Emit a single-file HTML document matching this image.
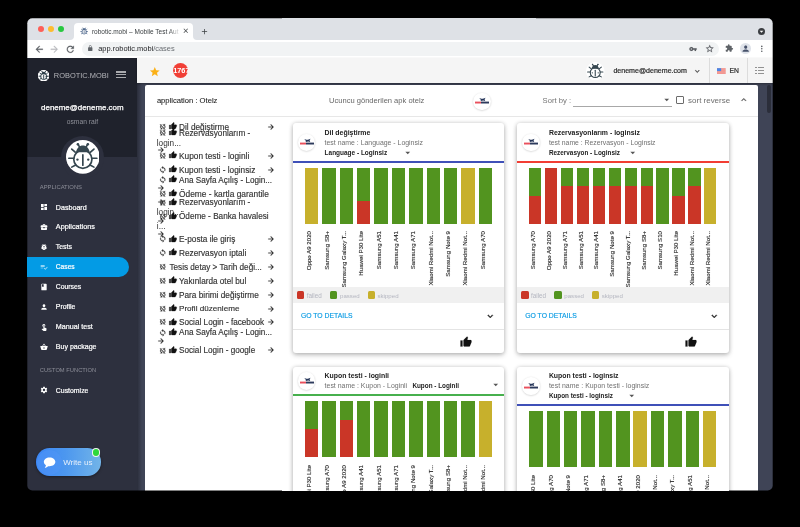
<!DOCTYPE html>
<html><head><meta charset="utf-8"><title>robotic.mobi</title>
<style>
html,body{margin:0;padding:0;background:#000;}
body{width:800px;height:527px;overflow:hidden;position:relative;font-family:"Liberation Sans",sans-serif;}
#win{position:absolute;left:0;top:0;will-change:transform;width:800px;height:527px;clip-path:inset(18.200px 27.300px 36.600px 27.300px round 5px);overflow:hidden;}
.t{position:absolute;white-space:nowrap;display:block;}
.r{position:absolute;}
.i{position:absolute;display:block;}
</style></head>
<body>
<div id="win">
<div class="r" style="left:27.00px;top:18.00px;width:746.00px;height:21.50px;background:#dee1e6;"></div>
<div class="r" style="left:27.00px;top:39.50px;width:746.00px;height:18.50px;background:#fff;"></div>
<div class="r" style="left:74.40px;top:22.70px;width:119.00px;height:17.30px;background:#fff;border-radius:4px 4px 0 0"></div>
<svg class="i" style="left:70.400px;top:35.500px;width:4px;height:4px" viewBox="0 0 4 4"><path fill="#fff" d="M4 0v4H0A4 4 0 0 0 4 0z"/></svg>
<svg class="i" style="left:193.400px;top:35.500px;width:4px;height:4px" viewBox="0 0 4 4"><path fill="#fff" d="M0 0v4h4A4 4 0 0 1 0 0z"/></svg>
<div class="r" style="left:37.90px;top:26.20px;width:6.20px;height:6.20px;background:#fe5f57;border-radius:50%"></div>
<div class="r" style="left:48.10px;top:26.20px;width:6.20px;height:6.20px;background:#febc2e;border-radius:50%"></div>
<div class="r" style="left:57.90px;top:26.20px;width:6.20px;height:6.20px;background:#28c840;border-radius:50%"></div>
<svg class="i" style="left:79.80px;top:26.90px;width:8.4px;height:8.4px" viewBox="0 0 40 40"><g stroke="#556d8f" stroke-width="3.4" stroke-linecap="round" fill="none"><path d="M16.300 8.500L14.100 5.100M23.700 8.500L25.900 5.100"/><path d="M10.900 14.500L6.800 10.900M29.100 14.500L33.200 10.900M9.200 21.700H3.400M30.800 21.700H36.600M11.500 29.600L6.800 32.200M28.500 29.600L33.200 32.200"/><path d="M20 17.700V30"/><circle cx="20" cy="22.900" r="10.800"/></g><path fill="#556d8f" d="M11.800 14.600C12.800 9.500 16 6.500 20 6.500s7.200 3 8.200 8.100z"/><circle cx="14.100" cy="5.100" r="1.500" fill="#556d8f"/><circle cx="25.900" cy="5.100" r="1.500" fill="#556d8f"/><circle cx="13.600" cy="23.300" r="1.400" fill="#556d8f"/><circle cx="26.400" cy="23.300" r="1.400" fill="#556d8f"/></svg>
<span class="t" style="left:91.90px;top:28.03px;font-size:6.50px;line-height:7.8px;color:#3c4043;">robotic.mobi – Mobile Test Aut</span>
<div class="r" style="left:168.00px;top:24.00px;width:13.00px;height:14.00px;background:linear-gradient(90deg,rgba(255,255,255,0),#fff);"></div>
<svg class="i" style="left:181.65px;top:27.45px;width:7.5px;height:7.5px;overflow:visible;" viewBox="0 0 24 24"><path fill="#3c4043" d="M19 6.410L17.590 5 12 10.590 6.410 5 5 6.410 10.590 12 5 17.590 6.410 19 12 13.410 17.590 19 19 17.590 13.410 12z"/></svg>
<svg class="i" style="left:199.60px;top:26.70px;width:9px;height:9px;overflow:visible;" viewBox="0 0 24 24"><path fill="#3c4043" d="M19 13h-6v6h-2v-6H5v-2h6V5h2v6h6v2z"/></svg>
<div class="r" style="left:757.70px;top:27.70px;width:7.40px;height:7.40px;background:#3a3d41;border-radius:50%"></div>
<svg class="i" style="left:756.90px;top:26.80px;width:9px;height:9px;overflow:visible;" viewBox="0 0 24 24"><path fill="#fff" d="M7 10l5 5 5-5z"/></svg>
<svg class="i" style="left:33.50px;top:43.50px;width:10.6px;height:10.6px;overflow:visible;" viewBox="0 0 24 24"><path fill="#5a5e63" stroke="#5a5e63" stroke-width="0.5" stroke-linejoin="round" d="M20 11H7.83l5.59-5.59L12 4l-8 8 8 8 1.41-1.41L7.83 13H20v-2z"/></svg>
<svg class="i" style="left:49.40px;top:43.50px;width:10.6px;height:10.6px;overflow:visible;transform:scaleX(-1)" viewBox="0 0 24 24"><path fill="#b9bbbf" stroke="#b9bbbf" stroke-width="0.5" stroke-linejoin="round" d="M20 11H7.83l5.59-5.59L12 4l-8 8 8 8 1.41-1.41L7.83 13H20v-2z"/></svg>
<svg class="i" style="left:65.30px;top:43.50px;width:10.6px;height:10.6px;overflow:visible;" viewBox="0 0 24 24"><path fill="#5a5e63" stroke="#5a5e63" stroke-width="0.5" stroke-linejoin="round" d="M17.65 6.35C16.2 4.9 14.21 4 12 4c-4.42 0-7.99 3.58-7.99 8s3.57 8 7.99 8c3.73 0 6.84-2.55 7.73-6h-2.08c-.82 2.33-3.04 4-5.65 4-3.31 0-6-2.69-6-6s2.69-6 6-6c1.66 0 3.14.69 4.22 1.78L13 11h7V4l-2.35 2.35z"/></svg>
<div class="r" style="left:82.30px;top:41.80px;width:636.70px;height:14.00px;background:#f1f3f4;border-radius:7px"></div>
<svg class="i" style="left:86.95px;top:45.35px;width:6.5px;height:6.5px;overflow:visible;" viewBox="0 0 24 24"><path fill="#5f6368" d="M18 8h-1V6c0-2.76-2.24-5-5-5S7 3.24 7 6v2H6c-1.1 0-2 .9-2 2v10c0 1.1.9 2 2 2h12c1.1 0 2-.9 2-2V10c0-1.1-.9-2-2-2zm-2.9 0H8.900V6c0-1.710 1.390-3.100 3.100-3.100 1.710 0 3.100 1.390 3.100 3.100v2z"/></svg>
<span class="t" style="left:98.20px;top:45.09px;font-size:7.44px;line-height:8.93px;color:#202124;">app.robotic.mobi<span style="color:#6a6e73">/cases</span></span>
<svg class="i" style="left:689.40px;top:44.80px;width:8px;height:8px;overflow:visible;" viewBox="0 0 24 24"><path fill="#5a5e63" stroke="#5a5e63" stroke-width="0.4" stroke-linejoin="round" d="M12.650 10C11.830 7.670 9.610 6 7 6c-3.310 0-6 2.690-6 6s2.690 6 6 6c2.610 0 4.830-1.670 5.650-4H17v4h4v-4h2v-4H12.650zM7 14c-1.100 0-2-.900-2-2s.900-2 2-2 2 .900 2 2-.900 2-2 2z"/></svg>
<svg class="i" style="left:705.00px;top:43.90px;width:9.4px;height:9.4px;overflow:visible;" viewBox="0 0 24 24"><path fill="#5a5e63" stroke="#5a5e63" stroke-width="0.4" stroke-linejoin="round" d="M22 9.240l-7.190-.620L12 2 9.190 8.630 2 9.240l5.460 4.730L5.820 21 12 17.270 18.180 21l-1.630-7.030L22 9.240zM12 15.400l-3.760 2.270 1-4.280-3.320-2.880 4.380-.380L12 6.100l1.710 4.040 4.380.380-3.320 2.880 1 4.280L12 15.400z"/></svg>
<svg class="i" style="left:725.45px;top:44.45px;width:8.5px;height:8.5px;overflow:visible;" viewBox="0 0 24 24"><path fill="#5f6368" d="M20.500 11H19V7c0-1.100-.900-2-2-2h-4V3.500C13 2.120 11.880 1 10.500 1S8 2.120 8 3.500V5H4c-1.100 0-1.990.900-1.990 2v3.800H3.500c1.490 0 2.700 1.210 2.700 2.700s-1.210 2.700-2.700 2.700H2V20c0 1.100.900 2 2 2h3.800v-1.500c0-1.490 1.210-2.700 2.700-2.700 1.490 0 2.700 1.210 2.700 2.700V22H17c1.100 0 2-.900 2-2v-4h1.500c1.380 0 2.500-1.120 2.500-2.500S21.880 11 20.500 11z"/></svg>
<div class="r" style="left:740.30px;top:43.40px;width:10.60px;height:10.60px;background:#dfe3ea;border-radius:50%"></div>
<svg class="i" style="left:740.90px;top:44.00px;width:9.4px;height:9.4px;overflow:visible;" viewBox="0 0 24 24"><path fill="#46516a" d="M12 12c2.21 0 4-1.79 4-4s-1.79-4-4-4-4 1.79-4 4 1.79 4 4 4zm0 2c-2.67 0-8 1.34-8 4v2h16v-2c0-2.66-5.33-4-8-4z"/></svg>
<svg class="i" style="left:756.80px;top:44.00px;width:9.6px;height:9.6px;overflow:visible;" viewBox="0 0 24 24"><path fill="#5a5e63" d="M12 8c1.100 0 2-.900 2-2s-.900-2-2-2-2 .900-2 2 .900 2 2 2zm0 2c-1.100 0-2 .900-2 2s.900 2 2 2 2-.900 2-2-.900-2-2-2zm0 6c-1.100 0-2 .900-2 2s.900 2 2 2 2-.900 2-2-.900-2-2-2z"/></svg>
<div class="r" style="left:137.00px;top:58.00px;width:636.00px;height:433.00px;background:#3f4456;"></div>
<div class="r" style="left:27.00px;top:58.00px;width:110.00px;height:99.10px;background:#1f222c;"></div>
<div class="r" style="left:27.00px;top:157.10px;width:110.00px;height:333.90px;background:#2d303e;"></div>
<div class="r" style="left:137.00px;top:83.00px;width:4.50px;height:408.00px;background:linear-gradient(90deg,rgba(28,30,40,.6),rgba(28,30,40,0));"></div>
<div class="r" style="left:137.00px;top:58.00px;width:636.00px;height:25.10px;background:#f5f5f5;box-shadow:0 1px 2px rgba(0,0,0,.35)"></div>
<svg class="i" style="left:149.10px;top:65.70px;width:11.6px;height:11.6px;overflow:visible;" viewBox="0 0 24 24"><path fill="#fbb016" d="M12 17.27L18.18 21l-1.64-7.03L22 9.24l-7.19-.61L12 2 9.19 8.63 2 9.24l5.46 4.73L5.82 21z"/></svg>
<div class="r" style="left:172.70px;top:62.60px;width:15.80px;height:15.80px;background:#f13f36;border-radius:50%;overflow:hidden"></div>
<span class="t" style="left:173.20px;top:66.83px;font-size:7.37px;line-height:8.85px;color:#fff;font-weight:bold;clip-path:inset(0 1.200px 0 0);">1767</span>
<svg class="i" style="left:586.05px;top:61.65px;width:18.5px;height:18.5px" viewBox="0 0 40 40"><circle cx="20" cy="20" r="20" fill="#fff"/><g stroke="#35464f" stroke-width="2.3" stroke-linecap="round" fill="none"><path d="M16.300 8.500L14.100 5.100M23.700 8.500L25.900 5.100"/><path d="M10.900 14.500L6.800 10.900M29.100 14.500L33.200 10.900M9.200 21.700H3.400M30.800 21.700H36.600M11.500 29.600L6.800 32.200M28.500 29.600L33.200 32.200"/><path d="M20 17.700V30"/><circle cx="20" cy="22.900" r="10.800"/></g><path fill="#35464f" d="M11.800 14.600C12.800 9.500 16 6.500 20 6.500s7.200 3 8.200 8.100z"/><circle cx="14.100" cy="5.100" r="1.500" fill="#35464f"/><circle cx="25.900" cy="5.100" r="1.500" fill="#35464f"/><circle cx="13.600" cy="23.300" r="1.400" fill="#35464f"/><circle cx="26.400" cy="23.300" r="1.400" fill="#35464f"/></svg>
<span class="t" style="left:613.40px;top:67.04px;font-size:7.07px;line-height:8.48px;color:#2a2a2a;-webkit-text-stroke:.2px #2a2a2a;">deneme@deneme.com</span>
<svg class="i" style="left:692.60px;top:66.60px;width:8.6px;height:8.6px;overflow:visible;" viewBox="0 0 24 24"><path fill="#444" stroke="#444" stroke-width="0.8" stroke-linejoin="round" d="M16.59 8.59L12 13.17 7.41 8.59 6 10l6 6 6-6z"/></svg>
<div class="r" style="left:709.10px;top:58.00px;width:0.50px;height:25.10px;background:#dcdcdc;"></div>
<svg class="i" style="left:717.100px;top:67.800px;width:8.700px;height:6.200px" viewBox="0 0 84 56"><rect width="84" height="56" fill="#f6dcd8"/><rect y="0.0" width="84" height="4.600" fill="#ee5a52"/><rect y="8.6" width="84" height="4.600" fill="#ee5a52"/><rect y="17.2" width="84" height="4.600" fill="#ee5a52"/><rect y="25.8" width="84" height="4.600" fill="#ee5a52"/><rect y="34.4" width="84" height="4.600" fill="#ee5a52"/><rect y="43.0" width="84" height="4.600" fill="#ee5a52"/><rect y="51.6" width="84" height="4.600" fill="#ee5a52"/><rect width="40" height="28" fill="#4a86e8"/></svg>
<span class="t" style="left:729.60px;top:66.95px;font-size:6.77px;line-height:8.12px;color:#2a2a2a;-webkit-text-stroke:.2px #2a2a2a;">EN</span>
<div class="r" style="left:747.10px;top:58.00px;width:0.50px;height:25.10px;background:#dcdcdc;"></div>
<div class="r" style="left:755.00px;top:67.30px;width:1.50px;height:1.20px;background:#929292;"></div>
<div class="r" style="left:757.80px;top:67.30px;width:6.60px;height:1.20px;background:#929292;"></div>
<div class="r" style="left:755.00px;top:70.30px;width:1.50px;height:1.20px;background:#929292;"></div>
<div class="r" style="left:757.80px;top:70.30px;width:6.60px;height:1.20px;background:#929292;"></div>
<div class="r" style="left:755.00px;top:73.30px;width:1.50px;height:1.20px;background:#929292;"></div>
<div class="r" style="left:757.80px;top:73.30px;width:6.60px;height:1.20px;background:#929292;"></div>
<div class="r" style="left:37.80px;top:69.80px;width:11.40px;height:11.40px;background:#f4f5f6;border-radius:50%"></div>
<svg class="i" style="left:37.80px;top:69.80px;width:11.4px;height:11.4px" viewBox="0 0 40 40"><circle cx="20" cy="20" r="20" fill="#fff"/><g stroke="#2c3e48" stroke-width="3.4" stroke-linecap="round" fill="none"><path d="M16.300 8.500L14.100 5.100M23.700 8.500L25.900 5.100"/><path d="M10.900 14.500L6.800 10.900M29.100 14.500L33.200 10.900M9.200 21.700H3.400M30.800 21.700H36.600M11.500 29.600L6.800 32.200M28.500 29.600L33.200 32.200"/><path d="M20 17.700V30"/><circle cx="20" cy="22.900" r="10.800"/></g><path fill="#2c3e48" d="M11.800 14.600C12.800 9.500 16 6.500 20 6.500s7.200 3 8.200 8.100z"/><circle cx="14.100" cy="5.100" r="1.500" fill="#2c3e48"/><circle cx="25.900" cy="5.100" r="1.500" fill="#2c3e48"/><circle cx="13.600" cy="23.300" r="1.400" fill="#2c3e48"/><circle cx="26.400" cy="23.300" r="1.400" fill="#2c3e48"/></svg>
<span class="t" style="left:53.80px;top:71.79px;font-size:7.44px;line-height:8.93px;color:#b4b5ba;">ROBOTIC.MOBI</span>
<div class="r" style="left:116.30px;top:71.25px;width:9.60px;height:1.30px;background:#a9aaae;"></div>
<div class="r" style="left:116.30px;top:74.00px;width:9.60px;height:1.30px;background:#a9aaae;"></div>
<div class="r" style="left:116.30px;top:76.75px;width:9.60px;height:1.30px;background:#a9aaae;"></div>
<span class="t" style="left:41.10px;top:103.25px;font-size:7.93px;line-height:9.52px;color:#fff;-webkit-text-stroke:.25px #fff;">deneme@deneme.com</span>
<span class="t" style="left:66.80px;top:118.29px;font-size:6.70px;line-height:8.05px;color:#8f9199;">osman raif</span>
<div class="r" style="left:60.80px;top:135.50px;width:43.20px;height:43.20px;background:#2d303e;border-radius:50%"></div>
<svg class="i" style="left:65.55px;top:140.25px;width:33.7px;height:33.7px" viewBox="0 0 40 40"><circle cx="20" cy="20" r="20" fill="#fff"/><g stroke="#35464f" stroke-width="2.0" stroke-linecap="round" fill="none"><path d="M16.300 8.500L14.100 5.100M23.700 8.500L25.900 5.100"/><path d="M10.900 14.500L6.800 10.900M29.100 14.500L33.200 10.900M9.200 21.700H3.400M30.800 21.700H36.600M11.500 29.600L6.800 32.200M28.500 29.600L33.200 32.200"/><path d="M20 17.700V30"/><circle cx="20" cy="22.900" r="10.800"/></g><path fill="#35464f" d="M11.800 14.600C12.800 9.500 16 6.500 20 6.500s7.200 3 8.200 8.100z"/><circle cx="14.100" cy="5.100" r="1.500" fill="#35464f"/><circle cx="25.900" cy="5.100" r="1.500" fill="#35464f"/><circle cx="13.600" cy="23.300" r="1.400" fill="#35464f"/><circle cx="26.400" cy="23.300" r="1.400" fill="#35464f"/></svg>
<span class="t" style="left:39.80px;top:184.38px;font-size:5.86px;line-height:7.03px;color:#8c8e98;">APPLICATIONS</span>
<span class="t" style="left:39.80px;top:367.14px;font-size:5.77px;line-height:6.92px;color:#8c8e98;">CUSTOM FUNCTION</span>
<div class="r" style="left:27.00px;top:257.00px;width:102.00px;height:20.00px;background:#039be5;border-radius:0 10px 10px 0"></div>
<svg class="i" style="left:39.60px;top:203.30px;width:8px;height:8px;overflow:visible;" viewBox="0 0 24 24"><path fill="#fff" d="M3 13h8V3H3v10zm0 8h8v-6H3v6zm10 0h8V11h-8v10zm0-18v6h8V3h-8z"/></svg>
<span class="t" style="left:55.80px;top:203.51px;font-size:7.13px;line-height:8.55px;color:#fff;-webkit-text-stroke:.2px #fff;">Dasboard</span>
<svg class="i" style="left:39.60px;top:223.20px;width:8px;height:8px;overflow:visible;" viewBox="0 0 24 24"><path fill="#fff" d="M10 16v-1H3.01L3 19c0 1.11.89 2 2 2h14c1.11 0 2-.89 2-2v-4h-7v1h-4zm10-9h-4.01V5l-2-2h-4l-2 2v2H4c-1.1 0-2 .9-2 2v3c0 1.11.89 2 2 2h6v-2h4v2h6c1.1 0 2-.9 2-2V9c0-1.1-.9-2-2-2zm-6 0h-4V5h4v2z"/></svg>
<span class="t" style="left:55.80px;top:223.32px;font-size:7.25px;line-height:8.7px;color:#fff;-webkit-text-stroke:.2px #fff;">Applications</span>
<svg class="i" style="left:39.60px;top:243.10px;width:8px;height:8px;overflow:visible;" viewBox="0 0 24 24"><path fill="#fff" d="M20 8h-2.81c-.45-.78-1.07-1.45-1.82-1.96L17 4.41 15.59 3l-2.17 2.17C12.96 5.06 12.49 5 12 5c-.49 0-.96.06-1.41.17L8.41 3 7 4.41l1.62 1.63C7.88 6.55 7.26 7.22 6.81 8H4v2h2.09c-.05.33-.09.66-.09 1v1H4v2h2v1c0 .34.04.67.09 1H4v2h2.81c1.04 1.79 2.97 3 5.19 3s4.15-1.21 5.19-3H20v-2h-2.09c.05-.33.09-.66.09-1v-1h2v-2h-2v-1c0-.34-.04-.67-.09-1H20V8zm-6 8h-4v-2h4v2zm0-4h-4v-2h4v2z"/></svg>
<span class="t" style="left:55.80px;top:243.43px;font-size:6.94px;line-height:8.33px;color:#fff;-webkit-text-stroke:.2px #fff;">Tests</span>
<svg class="i" style="left:39.60px;top:262.90px;width:8px;height:8px;overflow:visible;" viewBox="0 0 24 24"><path fill="#bfe6fa" d="M14 10H2v2h12v-2zm0-4H2v2h12V6zM2 16h8v-2H2v2zm19.5-4.5L23 13l-6.99 7-4.51-4.5L13 14l3.01 3 5.49-5.5z"/></svg>
<span class="t" style="left:55.80px;top:263.42px;font-size:6.67px;line-height:8.0px;color:#fff;-webkit-text-stroke:.2px #fff;">Cases</span>
<svg class="i" style="left:39.60px;top:282.80px;width:8px;height:8px;overflow:visible;" viewBox="0 0 24 24"><path fill="#fff" d="M18 2H6c-1.1 0-2 .9-2 2v16c0 1.1.9 2 2 2h12c1.1 0 2-.9 2-2V4c0-1.1-.9-2-2-2zM6 4h5v8l-2.5-1.5L6 12V4z"/></svg>
<span class="t" style="left:55.80px;top:283.21px;font-size:6.82px;line-height:8.19px;color:#fff;-webkit-text-stroke:.2px #fff;">Courses</span>
<svg class="i" style="left:39.60px;top:302.50px;width:8px;height:8px;overflow:visible;" viewBox="0 0 24 24"><path fill="#fff" d="M12 12c2.21 0 4-1.79 4-4s-1.79-4-4-4-4 1.79-4 4 1.79 4 4 4zm0 2c-2.67 0-8 1.34-8 4v2h16v-2c0-2.66-5.33-4-8-4z"/></svg>
<span class="t" style="left:55.80px;top:302.83px;font-size:6.95px;line-height:8.34px;color:#fff;-webkit-text-stroke:.2px #fff;">Profile</span>
<svg class="i" style="left:39.60px;top:322.50px;width:8px;height:8px;overflow:visible;" viewBox="0 0 24 24"><path fill="#fff" d="M9 11.24V7.5C9 6.12 10.12 5 11.5 5S14 6.12 14 7.5v3.74c1.21-.81 2-2.18 2-3.74C16 5.01 13.99 3 11.5 3S7 5.01 7 7.5c0 1.56.79 2.93 2 3.74zm9.84 4.63l-4.54-2.26c-.17-.07-.35-.11-.54-.11H13v-6c0-.83-.67-1.5-1.5-1.5S10 6.67 10 7.5v10.74l-3.43-.72c-.08-.01-.15-.03-.24-.03-.31 0-.59.13-.79.33l-.79.8 4.94 4.94c.27.27.65.44 1.06.44h6.79c.75 0 1.33-.55 1.44-1.28l.75-5.27c.01-.07.02-.14.02-.2 0-.62-.38-1.16-.91-1.38z"/></svg>
<span class="t" style="left:55.80px;top:322.68px;font-size:7.16px;line-height:8.59px;color:#fff;-webkit-text-stroke:.2px #fff;">Manual test</span>
<svg class="i" style="left:39.60px;top:342.50px;width:8px;height:8px;overflow:visible;" viewBox="0 0 24 24"><path fill="#fff" d="M17.21 9l-4.38-6.56c-.19-.28-.51-.42-.83-.42-.32 0-.64.14-.83.43L6.79 9H2c-.55 0-1 .45-1 1 0 .09.01.18.04.27l2.54 9.27c.23.84 1 1.46 1.92 1.46h13c.92 0 1.69-.62 1.93-1.46l2.54-9.27L23 10c0-.55-.45-1-1-1h-4.79zM9 9l3-4.4L15 9H9zm3 8c-1.1 0-2-.9-2-2s.9-2 2-2 2 .9 2 2-.9 2-2 2z"/></svg>
<span class="t" style="left:55.80px;top:342.75px;font-size:7.06px;line-height:8.47px;color:#fff;-webkit-text-stroke:.2px #fff;">Buy package</span>
<svg class="i" style="left:39.60px;top:386.20px;width:8px;height:8px;overflow:visible;" viewBox="0 0 24 24"><path fill="#fff" d="M19.43 12.98c.04-.32.07-.64.07-.98s-.03-.66-.07-.98l2.11-1.65c.19-.15.24-.42.12-.64l-2-3.46c-.12-.22-.39-.3-.61-.22l-2.49 1c-.52-.4-1.08-.73-1.69-.98l-.38-2.65C14.46 2.18 14.25 2 14 2h-4c-.25 0-.46.18-.49.42l-.38 2.65c-.61.25-1.17.59-1.69.98l-2.49-1c-.23-.09-.49 0-.61.22l-2 3.46c-.13.22-.07.49.12.64l2.11 1.65c-.04.32-.07.65-.07.98s.03.66.07.98l-2.11 1.65c-.19.15-.24.42-.12.64l2 3.46c.12.22.39.3.61.22l2.49-1c.52.4 1.08.73 1.69.98l.38 2.65c.03.24.24.42.49.42h4c.25 0 .46-.18.49-.42l.38-2.65c.61-.25 1.17-.59 1.69-.98l2.49 1c.23.09.49 0 .61-.22l2-3.46c.12-.22.07-.49-.12-.64l-2.11-1.65zM12 15.5c-1.93 0-3.5-1.57-3.5-3.5s1.57-3.5 3.5-3.5 3.5 1.57 3.5 3.5-1.57 3.5-3.5 3.5z"/></svg>
<span class="t" style="left:55.80px;top:386.54px;font-size:6.92px;line-height:8.31px;color:#fff;-webkit-text-stroke:.2px #fff;">Customize</span>
<div class="r" style="left:35.50px;top:448.30px;width:65.50px;height:27.40px;background:linear-gradient(90deg,#3b86f6 0%,#4c97ef 45%,#72b4e8 100%);border-radius:13.700px;box-shadow:0 1px 3px rgba(0,0,0,.4)"></div>
<div class="r" style="left:36.60px;top:449.50px;width:25.00px;height:25.00px;background:rgba(80,150,246,.55);border-radius:50%"></div>
<svg class="i" style="left:43.200px;top:456.600px;width:13.200px;height:11.600px" viewBox="0 0 126 115"><path fill="#fff" d="M63 4C30 4 6 22 6 48c0 14 8 26 21 33-1 9-5 18-12 26 14-1 26-7 34-16 4 1 9 1 14 1 33 0 57-18 57-44S96 4 63 4z"/></svg>
<span class="t" style="left:63.20px;top:458.38px;font-size:8.03px;line-height:9.64px;color:#e6effb;">Write us</span>
<div class="r" style="left:91.50px;top:448.20px;width:8.60px;height:8.60px;background:#f4f7f4;border-radius:50%"></div>
<div class="r" style="left:92.60px;top:449.30px;width:6.40px;height:6.40px;background:#2fd83c;border-radius:50%"></div>
<div class="r" style="left:145.00px;top:84.90px;width:613.40px;height:410.10px;background:#fff;border-radius:2px 2px 0 0"></div>
<div class="r" style="left:767.20px;top:84.60px;width:3.80px;height:28.10px;background:#2b2e3a;border-radius:2px"></div>
<span class="t" style="left:156.90px;top:96.36px;font-size:7.62px;line-height:9.15px;color:#222;-webkit-text-stroke:.08px #222;">application : Otelz</span>
<span class="t" style="left:329.10px;top:96.21px;font-size:7.56px;line-height:9.07px;color:#666;">Ucuncu gönderilen apk otelz</span>
<div class="r" style="left:473.40px;top:92.90px;width:17.4px;height:17.4px;background:#fff;border-radius:50%;box-shadow:0 0.500px 2px rgba(0,0,0,.2)"></div><svg class="i" style="left:475.10px;top:97.30px;width:14px;height:8px" viewBox="0 0 14 8"><path fill="#26365a" d="M4.200 1.100l2.300.600h1.400l2.700-.900-1 1.500.600 1.700-2-.500-2.300.400-.400-1.700z"/><rect x="0" y="4.600" width="6" height="1.900" fill="#e9505d"/><rect x="6" y="4.600" width="8" height="1.900" fill="#2d3a5c"/></svg>
<span class="t" style="left:542.60px;top:95.74px;font-size:7.65px;line-height:9.18px;color:#757575;">Sort by :</span>
<div class="r" style="left:572.90px;top:106.10px;width:98.70px;height:0.60px;background:#a8a8a8;"></div>
<svg class="i" style="left:661.35px;top:93.65px;width:11.5px;height:11.5px;overflow:visible;" viewBox="0 0 24 24"><path fill="#555" d="M7 10l5 5 5-5z"/></svg>
<div class="r" style="left:676.10px;top:96.30px;width:7.60px;height:7.60px;background:#fff;border:1px solid #6b6b6b;border-radius:1px;box-sizing:border-box"></div>
<span class="t" style="left:688.10px;top:95.53px;font-size:7.96px;line-height:9.55px;color:#6d6d6d;">sort reverse</span>
<svg class="i" style="left:739.15px;top:94.85px;width:9.5px;height:9.5px;overflow:visible;" viewBox="0 0 24 24"><path fill="#555" stroke="#555" stroke-width="0.8" stroke-linejoin="round" d="M12 8l-6 6 1.41 1.41L12 10.83l4.59 4.58L18 14z"/></svg>
<div class="r" style="left:145.00px;top:115.80px;width:613.40px;height:0.70px;background:#e7e7e7;"></div>
<svg class="i" style="left:158.60px;top:123.00px;width:7.6px;height:7.6px;overflow:visible;" viewBox="0 0 24 24"><path fill="#333" stroke="#333" stroke-width="0.7" stroke-linejoin="round" d="M10 6.35V4.26c-.8.21-1.55.54-2.23.96l1.46 1.46c.25-.12.5-.24.77-.33zm-7.14-.94l2.36 2.36C4.45 8.99 4 10.44 4 12c0 2.21.91 4.2 2.36 5.64L4 20h6v-6l-2.24 2.24C6.68 15.15 6 13.66 6 12c0-1 .25-1.94.68-2.77l8.08 8.08c-.25.13-.5.25-.77.34v2.09c.8-.21 1.55-.54 2.23-.96l2.36 2.36 1.27-1.27L4.14 4.14 2.86 5.41zM20 4h-6v6l2.24-2.24C17.32 8.85 18 10.34 18 12c0 1-.25 1.94-.68 2.77l1.46 1.46C19.55 15.01 20 13.56 20 12c0-2.21-.91-4.2-2.36-5.64L20 4z"/></svg>
<svg class="i" style="left:168.50px;top:122.30px;width:8px;height:8px;overflow:visible;" viewBox="0 0 24 24"><path fill="#111" stroke="#111" stroke-width="0.9" stroke-linejoin="round" d="M1 21h4V9H1v12zm22-11c0-1.1-.9-2-2-2h-6.31l.95-4.57.03-.32c0-.41-.17-.79-.44-1.06L14.17 1 7.59 7.59C7.22 7.95 7 8.45 7 9v10c0 1.1.9 2 2 2h9c.83 0 1.54-.5 1.84-1.22l3.02-7.05c.09-.23.14-.47.14-.73v-2z"/></svg>
<span class="t" style="left:179.00px;top:122.63px;font-size:8.25px;line-height:9.91px;color:#333;-webkit-text-stroke:.15px #333;">Dil değiştirme</span>
<svg class="i" style="left:266.70px;top:122.80px;width:8px;height:8px;overflow:visible;" viewBox="0 0 24 24"><path fill="#222" stroke="#222" stroke-width="0.7" stroke-linejoin="round" d="M12 4l-1.41 1.41L16.17 11H4v2h12.17l-5.58 5.59L12 20l8-8z"/></svg>
<svg class="i" style="left:158.60px;top:129.00px;width:7.6px;height:7.6px;overflow:visible;" viewBox="0 0 24 24"><path fill="#333" stroke="#333" stroke-width="0.7" stroke-linejoin="round" d="M10 6.35V4.26c-.8.21-1.55.54-2.23.96l1.46 1.46c.25-.12.5-.24.77-.33zm-7.14-.94l2.36 2.36C4.45 8.99 4 10.44 4 12c0 2.21.91 4.2 2.36 5.64L4 20h6v-6l-2.24 2.24C6.68 15.15 6 13.66 6 12c0-1 .25-1.94.68-2.77l8.08 8.08c-.25.13-.5.25-.77.34v2.09c.8-.21 1.55-.54 2.23-.96l2.36 2.36 1.27-1.27L4.14 4.14 2.86 5.41zM20 4h-6v6l2.24-2.24C17.32 8.85 18 10.34 18 12c0 1-.25 1.94-.68 2.77l1.46 1.46C19.55 15.01 20 13.56 20 12c0-2.21-.91-4.2-2.36-5.64L20 4z"/></svg>
<svg class="i" style="left:168.50px;top:128.30px;width:8px;height:8px;overflow:visible;" viewBox="0 0 24 24"><path fill="#111" stroke="#111" stroke-width="0.9" stroke-linejoin="round" d="M1 21h4V9H1v12zm22-11c0-1.1-.9-2-2-2h-6.31l.95-4.57.03-.32c0-.41-.17-.79-.44-1.06L14.17 1 7.59 7.59C7.22 7.95 7 8.45 7 9v10c0 1.1.9 2 2 2h9c.83 0 1.54-.5 1.84-1.22l3.02-7.05c.09-.23.14-.47.14-.73v-2z"/></svg>
<span class="t" style="left:179.00px;top:128.65px;font-size:8.22px;line-height:9.87px;color:#333;-webkit-text-stroke:.15px #333;">Rezervasyonlarım -</span>
<span class="t" style="left:156.80px;top:138.66px;font-size:8.21px;line-height:9.86px;color:#333;">login...</span>
<svg class="i" style="left:157.00px;top:146.00px;width:8px;height:8px;overflow:visible;" viewBox="0 0 24 24"><path fill="#222" stroke="#222" stroke-width="0.7" stroke-linejoin="round" d="M12 4l-1.41 1.41L16.17 11H4v2h12.17l-5.58 5.59L12 20l8-8z"/></svg>
<svg class="i" style="left:158.60px;top:151.70px;width:7.6px;height:7.6px;overflow:visible;" viewBox="0 0 24 24"><path fill="#333" stroke="#333" stroke-width="0.7" stroke-linejoin="round" d="M10 6.35V4.26c-.8.21-1.55.54-2.23.96l1.46 1.46c.25-.12.5-.24.77-.33zm-7.14-.94l2.36 2.36C4.45 8.99 4 10.44 4 12c0 2.21.91 4.2 2.36 5.64L4 20h6v-6l-2.24 2.24C6.68 15.15 6 13.66 6 12c0-1 .25-1.94.68-2.77l8.08 8.08c-.25.13-.5.25-.77.34v2.09c.8-.21 1.55-.54 2.23-.96l2.36 2.36 1.27-1.27L4.14 4.14 2.86 5.41zM20 4h-6v6l2.24-2.24C17.32 8.85 18 10.34 18 12c0 1-.25 1.94-.68 2.77l1.46 1.46C19.55 15.01 20 13.56 20 12c0-2.21-.91-4.2-2.36-5.64L20 4z"/></svg>
<svg class="i" style="left:168.50px;top:151.00px;width:8px;height:8px;overflow:visible;" viewBox="0 0 24 24"><path fill="#111" stroke="#111" stroke-width="0.9" stroke-linejoin="round" d="M1 21h4V9H1v12zm22-11c0-1.1-.9-2-2-2h-6.31l.95-4.57.03-.32c0-.41-.17-.79-.44-1.06L14.17 1 7.59 7.59C7.22 7.95 7 8.45 7 9v10c0 1.1.9 2 2 2h9c.83 0 1.54-.5 1.84-1.22l3.02-7.05c.09-.23.14-.47.14-.73v-2z"/></svg>
<span class="t" style="left:179.00px;top:151.29px;font-size:8.32px;line-height:9.98px;color:#333;-webkit-text-stroke:.15px #333;">Kupon testi - loginli</span>
<svg class="i" style="left:266.70px;top:151.50px;width:8px;height:8px;overflow:visible;" viewBox="0 0 24 24"><path fill="#222" stroke="#222" stroke-width="0.7" stroke-linejoin="round" d="M12 4l-1.41 1.41L16.17 11H4v2h12.17l-5.58 5.59L12 20l8-8z"/></svg>
<svg class="i" style="left:158.60px;top:165.90px;width:7.6px;height:7.6px;overflow:visible;" viewBox="0 0 24 24"><path fill="#333" stroke="#333" stroke-width="0.7" stroke-linejoin="round" d="M12 4V1L8 5l4 4V6c3.31 0 6 2.69 6 6 0 1.01-.25 1.97-.7 2.8l1.46 1.46C19.54 15.03 20 13.57 20 12c0-4.42-3.58-8-8-8zm0 14c-3.31 0-6-2.69-6-6 0-1.01.25-1.97.7-2.8L5.24 7.74C4.46 8.97 4 10.43 4 12c0 4.42 3.58 8 8 8v3l4-4-4-4v3z"/></svg>
<svg class="i" style="left:168.50px;top:165.20px;width:8px;height:8px;overflow:visible;" viewBox="0 0 24 24"><path fill="#111" stroke="#111" stroke-width="0.9" stroke-linejoin="round" d="M1 21h4V9H1v12zm22-11c0-1.1-.9-2-2-2h-6.31l.95-4.57.03-.32c0-.41-.17-.79-.44-1.06L14.17 1 7.59 7.59C7.22 7.95 7 8.45 7 9v10c0 1.1.9 2 2 2h9c.83 0 1.54-.5 1.84-1.22l3.02-7.05c.09-.23.14-.47.14-.73v-2z"/></svg>
<span class="t" style="left:179.00px;top:165.52px;font-size:8.27px;line-height:9.92px;color:#333;-webkit-text-stroke:.15px #333;">Kupon testi - loginsiz</span>
<svg class="i" style="left:266.70px;top:165.70px;width:8px;height:8px;overflow:visible;" viewBox="0 0 24 24"><path fill="#222" stroke="#222" stroke-width="0.7" stroke-linejoin="round" d="M12 4l-1.41 1.41L16.17 11H4v2h12.17l-5.58 5.59L12 20l8-8z"/></svg>
<svg class="i" style="left:158.60px;top:175.90px;width:7.6px;height:7.6px;overflow:visible;" viewBox="0 0 24 24"><path fill="#333" stroke="#333" stroke-width="0.7" stroke-linejoin="round" d="M12 4V1L8 5l4 4V6c3.31 0 6 2.69 6 6 0 1.01-.25 1.97-.7 2.8l1.46 1.46C19.54 15.03 20 13.57 20 12c0-4.42-3.58-8-8-8zm0 14c-3.31 0-6-2.69-6-6 0-1.01.25-1.97.7-2.8L5.24 7.74C4.46 8.97 4 10.43 4 12c0 4.42 3.58 8 8 8v3l4-4-4-4v3z"/></svg>
<svg class="i" style="left:168.50px;top:175.20px;width:8px;height:8px;overflow:visible;" viewBox="0 0 24 24"><path fill="#111" stroke="#111" stroke-width="0.9" stroke-linejoin="round" d="M1 21h4V9H1v12zm22-11c0-1.1-.9-2-2-2h-6.31l.95-4.57.03-.32c0-.41-.17-.79-.44-1.06L14.17 1 7.59 7.59C7.22 7.95 7 8.45 7 9v10c0 1.1.9 2 2 2h9c.83 0 1.54-.5 1.84-1.22l3.02-7.05c.09-.23.14-.47.14-.73v-2z"/></svg>
<span class="t" style="left:179.00px;top:175.61px;font-size:8.14px;line-height:9.77px;color:#333;-webkit-text-stroke:.15px #333;">Ana Sayfa Açılış - Login...</span>
<svg class="i" style="left:157.00px;top:183.80px;width:8px;height:8px;overflow:visible;" viewBox="0 0 24 24"><path fill="#222" stroke="#222" stroke-width="0.7" stroke-linejoin="round" d="M12 4l-1.41 1.41L16.17 11H4v2h12.17l-5.58 5.59L12 20l8-8z"/></svg>
<svg class="i" style="left:158.60px;top:189.80px;width:7.6px;height:7.6px;overflow:visible;" viewBox="0 0 24 24"><path fill="#333" stroke="#333" stroke-width="0.7" stroke-linejoin="round" d="M10 6.35V4.26c-.8.21-1.55.54-2.23.96l1.46 1.46c.25-.12.5-.24.77-.33zm-7.14-.94l2.36 2.36C4.45 8.99 4 10.44 4 12c0 2.21.91 4.2 2.36 5.64L4 20h6v-6l-2.24 2.24C6.68 15.15 6 13.66 6 12c0-1 .25-1.94.68-2.77l8.08 8.08c-.25.13-.5.25-.77.34v2.09c.8-.21 1.55-.54 2.23-.96l2.36 2.36 1.27-1.27L4.14 4.14 2.86 5.41zM20 4h-6v6l2.24-2.24C17.32 8.85 18 10.34 18 12c0 1-.25 1.94-.68 2.77l1.46 1.46C19.55 15.01 20 13.56 20 12c0-2.21-.91-4.2-2.36-5.64L20 4z"/></svg>
<svg class="i" style="left:168.50px;top:189.10px;width:8px;height:8px;overflow:visible;" viewBox="0 0 24 24"><path fill="#111" stroke="#111" stroke-width="0.9" stroke-linejoin="round" d="M1 21h4V9H1v12zm22-11c0-1.1-.9-2-2-2h-6.31l.95-4.57.03-.32c0-.41-.17-.79-.44-1.06L14.17 1 7.59 7.59C7.22 7.95 7 8.45 7 9v10c0 1.1.9 2 2 2h9c.83 0 1.54-.5 1.84-1.22l3.02-7.05c.09-.23.14-.47.14-.73v-2z"/></svg>
<span class="t" style="left:179.00px;top:189.34px;font-size:8.39px;line-height:10.07px;color:#333;-webkit-text-stroke:.15px #333;">Ödeme - kartla garantile</span>
<svg class="i" style="left:157.00px;top:197.70px;width:8px;height:8px;overflow:visible;" viewBox="0 0 24 24"><path fill="#222" stroke="#222" stroke-width="0.7" stroke-linejoin="round" d="M12 4l-1.41 1.41L16.17 11H4v2h12.17l-5.58 5.59L12 20l8-8z"/></svg>
<svg class="i" style="left:158.60px;top:198.60px;width:7.6px;height:7.6px;overflow:visible;" viewBox="0 0 24 24"><path fill="#333" stroke="#333" stroke-width="0.7" stroke-linejoin="round" d="M10 6.35V4.26c-.8.21-1.55.54-2.23.96l1.46 1.46c.25-.12.5-.24.77-.33zm-7.14-.94l2.36 2.36C4.45 8.99 4 10.44 4 12c0 2.21.91 4.2 2.36 5.64L4 20h6v-6l-2.24 2.24C6.68 15.15 6 13.66 6 12c0-1 .25-1.94.68-2.77l8.08 8.08c-.25.13-.5.25-.77.34v2.09c.8-.21 1.55-.54 2.23-.96l2.36 2.36 1.27-1.27L4.14 4.14 2.86 5.41zM20 4h-6v6l2.24-2.24C17.32 8.85 18 10.34 18 12c0 1-.25 1.94-.68 2.77l1.46 1.46C19.55 15.01 20 13.56 20 12c0-2.21-.91-4.2-2.36-5.64L20 4z"/></svg>
<svg class="i" style="left:168.50px;top:197.90px;width:8px;height:8px;overflow:visible;" viewBox="0 0 24 24"><path fill="#111" stroke="#111" stroke-width="0.9" stroke-linejoin="round" d="M1 21h4V9H1v12zm22-11c0-1.1-.9-2-2-2h-6.31l.95-4.57.03-.32c0-.41-.17-.79-.44-1.06L14.17 1 7.59 7.59C7.22 7.95 7 8.45 7 9v10c0 1.1.9 2 2 2h9c.83 0 1.54-.5 1.84-1.22l3.02-7.05c.09-.23.14-.47.14-.73v-2z"/></svg>
<span class="t" style="left:179.00px;top:198.25px;font-size:8.22px;line-height:9.87px;color:#333;-webkit-text-stroke:.15px #333;">Rezervasyonlarım -</span>
<span class="t" style="left:156.80px;top:208.06px;font-size:8.21px;line-height:9.86px;color:#333;">login...</span>
<svg class="i" style="left:158.60px;top:212.50px;width:7.6px;height:7.6px;overflow:visible;" viewBox="0 0 24 24"><path fill="#333" stroke="#333" stroke-width="0.7" stroke-linejoin="round" d="M10 6.35V4.26c-.8.21-1.55.54-2.23.96l1.46 1.46c.25-.12.5-.24.77-.33zm-7.14-.94l2.36 2.36C4.45 8.99 4 10.44 4 12c0 2.21.91 4.2 2.36 5.64L4 20h6v-6l-2.24 2.24C6.68 15.15 6 13.66 6 12c0-1 .25-1.94.68-2.77l8.08 8.08c-.25.13-.5.25-.77.34v2.09c.8-.21 1.55-.54 2.23-.96l2.36 2.36 1.27-1.27L4.14 4.14 2.86 5.41zM20 4h-6v6l2.24-2.24C17.32 8.85 18 10.34 18 12c0 1-.25 1.94-.68 2.77l1.46 1.46C19.55 15.01 20 13.56 20 12c0-2.21-.91-4.2-2.36-5.64L20 4z"/></svg>
<svg class="i" style="left:168.50px;top:211.80px;width:8px;height:8px;overflow:visible;" viewBox="0 0 24 24"><path fill="#111" stroke="#111" stroke-width="0.9" stroke-linejoin="round" d="M1 21h4V9H1v12zm22-11c0-1.1-.9-2-2-2h-6.31l.95-4.57.03-.32c0-.41-.17-.79-.44-1.06L14.17 1 7.59 7.59C7.22 7.95 7 8.45 7 9v10c0 1.1.9 2 2 2h9c.83 0 1.54-.5 1.84-1.22l3.02-7.05c.09-.23.14-.47.14-.73v-2z"/></svg>
<span class="t" style="left:179.00px;top:212.17px;font-size:8.20px;line-height:9.84px;color:#333;-webkit-text-stroke:.15px #333;">Ödeme - Banka havalesi</span>
<svg class="i" style="left:157.00px;top:217.00px;width:8px;height:8px;overflow:visible;" viewBox="0 0 24 24"><path fill="#222" stroke="#222" stroke-width="0.7" stroke-linejoin="round" d="M12 4l-1.41 1.41L16.17 11H4v2h12.17l-5.58 5.59L12 20l8-8z"/></svg>
<span class="t" style="left:156.80px;top:221.94px;font-size:8.24px;line-height:9.89px;color:#333;">i...</span>
<svg class="i" style="left:156.50px;top:230.30px;width:8px;height:8px;overflow:visible;" viewBox="0 0 24 24"><path fill="#222" stroke="#222" stroke-width="0.7" stroke-linejoin="round" d="M12 4l-1.41 1.41L16.17 11H4v2h12.17l-5.58 5.59L12 20l8-8z"/></svg>
<svg class="i" style="left:158.60px;top:235.20px;width:7.6px;height:7.6px;overflow:visible;" viewBox="0 0 24 24"><path fill="#333" stroke="#333" stroke-width="0.7" stroke-linejoin="round" d="M12 4V1L8 5l4 4V6c3.31 0 6 2.69 6 6 0 1.01-.25 1.97-.7 2.8l1.46 1.46C19.54 15.03 20 13.57 20 12c0-4.42-3.58-8-8-8zm0 14c-3.31 0-6-2.69-6-6 0-1.01.25-1.97.7-2.8L5.24 7.74C4.46 8.97 4 10.43 4 12c0 4.42 3.58 8 8 8v3l4-4-4-4v3z"/></svg>
<svg class="i" style="left:168.50px;top:234.50px;width:8px;height:8px;overflow:visible;" viewBox="0 0 24 24"><path fill="#111" stroke="#111" stroke-width="0.9" stroke-linejoin="round" d="M1 21h4V9H1v12zm22-11c0-1.1-.9-2-2-2h-6.31l.95-4.57.03-.32c0-.41-.17-.79-.44-1.06L14.17 1 7.59 7.59C7.22 7.95 7 8.45 7 9v10c0 1.1.9 2 2 2h9c.83 0 1.54-.5 1.84-1.22l3.02-7.05c.09-.23.14-.47.14-.73v-2z"/></svg>
<span class="t" style="left:179.00px;top:234.84px;font-size:8.24px;line-height:9.88px;color:#333;-webkit-text-stroke:.15px #333;">E-posta ile giriş</span>
<svg class="i" style="left:266.70px;top:235.00px;width:8px;height:8px;overflow:visible;" viewBox="0 0 24 24"><path fill="#222" stroke="#222" stroke-width="0.7" stroke-linejoin="round" d="M12 4l-1.41 1.41L16.17 11H4v2h12.17l-5.58 5.59L12 20l8-8z"/></svg>
<svg class="i" style="left:158.60px;top:249.10px;width:7.6px;height:7.6px;overflow:visible;" viewBox="0 0 24 24"><path fill="#333" stroke="#333" stroke-width="0.7" stroke-linejoin="round" d="M12 4V1L8 5l4 4V6c3.31 0 6 2.69 6 6 0 1.01-.25 1.97-.7 2.8l1.46 1.46C19.54 15.03 20 13.57 20 12c0-4.42-3.58-8-8-8zm0 14c-3.31 0-6-2.69-6-6 0-1.01.25-1.97.7-2.8L5.24 7.74C4.46 8.97 4 10.43 4 12c0 4.42 3.58 8 8 8v3l4-4-4-4v3z"/></svg>
<svg class="i" style="left:168.50px;top:248.40px;width:8px;height:8px;overflow:visible;" viewBox="0 0 24 24"><path fill="#111" stroke="#111" stroke-width="0.9" stroke-linejoin="round" d="M1 21h4V9H1v12zm22-11c0-1.1-.9-2-2-2h-6.31l.95-4.57.03-.32c0-.41-.17-.79-.44-1.06L14.17 1 7.59 7.59C7.22 7.95 7 8.45 7 9v10c0 1.1.9 2 2 2h9c.83 0 1.54-.5 1.84-1.22l3.02-7.05c.09-.23.14-.47.14-.73v-2z"/></svg>
<span class="t" style="left:179.00px;top:248.74px;font-size:8.24px;line-height:9.88px;color:#333;-webkit-text-stroke:.15px #333;">Rezervasyon iptali</span>
<svg class="i" style="left:266.70px;top:248.90px;width:8px;height:8px;overflow:visible;" viewBox="0 0 24 24"><path fill="#222" stroke="#222" stroke-width="0.7" stroke-linejoin="round" d="M12 4l-1.41 1.41L16.17 11H4v2h12.17l-5.58 5.59L12 20l8-8z"/></svg>
<svg class="i" style="left:158.60px;top:263.20px;width:7.6px;height:7.6px;overflow:visible;" viewBox="0 0 24 24"><path fill="#333" stroke="#333" stroke-width="0.7" stroke-linejoin="round" d="M10 6.35V4.26c-.8.21-1.55.54-2.23.96l1.46 1.46c.25-.12.5-.24.77-.33zm-7.14-.94l2.36 2.36C4.45 8.99 4 10.44 4 12c0 2.21.91 4.2 2.36 5.64L4 20h6v-6l-2.24 2.24C6.68 15.15 6 13.66 6 12c0-1 .25-1.94.68-2.77l8.08 8.08c-.25.13-.5.25-.77.34v2.09c.8-.21 1.55-.54 2.23-.96l2.36 2.36 1.27-1.27L4.14 4.14 2.86 5.41zM20 4h-6v6l2.24-2.24C17.32 8.85 18 10.34 18 12c0 1-.25 1.94-.68 2.77l1.46 1.46C19.55 15.01 20 13.56 20 12c0-2.21-.91-4.2-2.36-5.64L20 4z"/></svg>
<span class="t" style="left:169.40px;top:262.87px;font-size:8.20px;line-height:9.84px;color:#333;-webkit-text-stroke:.15px #333;">Tesis detay &gt; Tarih deği...</span>
<svg class="i" style="left:266.70px;top:263.00px;width:8px;height:8px;overflow:visible;" viewBox="0 0 24 24"><path fill="#222" stroke="#222" stroke-width="0.7" stroke-linejoin="round" d="M12 4l-1.41 1.41L16.17 11H4v2h12.17l-5.58 5.59L12 20l8-8z"/></svg>
<svg class="i" style="left:158.60px;top:277.10px;width:7.6px;height:7.6px;overflow:visible;" viewBox="0 0 24 24"><path fill="#333" stroke="#333" stroke-width="0.7" stroke-linejoin="round" d="M10 6.35V4.26c-.8.21-1.55.54-2.23.96l1.46 1.46c.25-.12.5-.24.77-.33zm-7.14-.94l2.36 2.36C4.45 8.99 4 10.44 4 12c0 2.21.91 4.2 2.36 5.64L4 20h6v-6l-2.24 2.24C6.68 15.15 6 13.66 6 12c0-1 .25-1.94.68-2.77l8.08 8.08c-.25.13-.5.25-.77.34v2.09c.8-.21 1.55-.54 2.23-.96l2.36 2.36 1.27-1.27L4.14 4.14 2.86 5.41zM20 4h-6v6l2.24-2.24C17.32 8.85 18 10.34 18 12c0 1-.25 1.94-.68 2.77l1.46 1.46C19.55 15.01 20 13.56 20 12c0-2.21-.91-4.2-2.36-5.64L20 4z"/></svg>
<svg class="i" style="left:168.50px;top:276.40px;width:8px;height:8px;overflow:visible;" viewBox="0 0 24 24"><path fill="#111" stroke="#111" stroke-width="0.9" stroke-linejoin="round" d="M1 21h4V9H1v12zm22-11c0-1.1-.9-2-2-2h-6.31l.95-4.57.03-.32c0-.41-.17-.79-.44-1.06L14.17 1 7.59 7.59C7.22 7.95 7 8.45 7 9v10c0 1.1.9 2 2 2h9c.83 0 1.54-.5 1.84-1.22l3.02-7.05c.09-.23.14-.47.14-.73v-2z"/></svg>
<span class="t" style="left:179.00px;top:276.77px;font-size:8.20px;line-height:9.84px;color:#333;-webkit-text-stroke:.15px #333;">Yakınlarda otel bul</span>
<svg class="i" style="left:266.70px;top:276.90px;width:8px;height:8px;overflow:visible;" viewBox="0 0 24 24"><path fill="#222" stroke="#222" stroke-width="0.7" stroke-linejoin="round" d="M12 4l-1.41 1.41L16.17 11H4v2h12.17l-5.58 5.59L12 20l8-8z"/></svg>
<svg class="i" style="left:158.60px;top:290.90px;width:7.6px;height:7.6px;overflow:visible;" viewBox="0 0 24 24"><path fill="#333" stroke="#333" stroke-width="0.7" stroke-linejoin="round" d="M10 6.35V4.26c-.8.21-1.55.54-2.23.96l1.46 1.46c.25-.12.5-.24.77-.33zm-7.14-.94l2.36 2.36C4.45 8.99 4 10.44 4 12c0 2.21.91 4.2 2.36 5.64L4 20h6v-6l-2.24 2.24C6.68 15.15 6 13.66 6 12c0-1 .25-1.94.68-2.77l8.08 8.08c-.25.13-.5.25-.77.34v2.09c.8-.21 1.55-.54 2.23-.96l2.36 2.36 1.27-1.27L4.14 4.14 2.86 5.41zM20 4h-6v6l2.24-2.24C17.32 8.85 18 10.34 18 12c0 1-.25 1.94-.68 2.77l1.46 1.46C19.55 15.01 20 13.56 20 12c0-2.21-.91-4.2-2.36-5.64L20 4z"/></svg>
<svg class="i" style="left:168.50px;top:290.20px;width:8px;height:8px;overflow:visible;" viewBox="0 0 24 24"><path fill="#111" stroke="#111" stroke-width="0.9" stroke-linejoin="round" d="M1 21h4V9H1v12zm22-11c0-1.1-.9-2-2-2h-6.31l.95-4.57.03-.32c0-.41-.17-.79-.44-1.06L14.17 1 7.59 7.59C7.22 7.95 7 8.45 7 9v10c0 1.1.9 2 2 2h9c.83 0 1.54-.5 1.84-1.22l3.02-7.05c.09-.23.14-.47.14-.73v-2z"/></svg>
<span class="t" style="left:179.00px;top:290.53px;font-size:8.25px;line-height:9.9px;color:#333;-webkit-text-stroke:.15px #333;">Para birimi değiştirme</span>
<svg class="i" style="left:266.70px;top:290.70px;width:8px;height:8px;overflow:visible;" viewBox="0 0 24 24"><path fill="#222" stroke="#222" stroke-width="0.7" stroke-linejoin="round" d="M12 4l-1.41 1.41L16.17 11H4v2h12.17l-5.58 5.59L12 20l8-8z"/></svg>
<svg class="i" style="left:158.60px;top:304.70px;width:7.6px;height:7.6px;overflow:visible;" viewBox="0 0 24 24"><path fill="#333" stroke="#333" stroke-width="0.7" stroke-linejoin="round" d="M10 6.35V4.26c-.8.21-1.55.54-2.23.96l1.46 1.46c.25-.12.5-.24.77-.33zm-7.14-.94l2.36 2.36C4.45 8.99 4 10.44 4 12c0 2.21.91 4.2 2.36 5.64L4 20h6v-6l-2.24 2.24C6.68 15.15 6 13.66 6 12c0-1 .25-1.94.68-2.77l8.08 8.08c-.25.13-.5.25-.77.34v2.09c.8-.21 1.55-.54 2.23-.96l2.36 2.36 1.27-1.27L4.14 4.14 2.86 5.41zM20 4h-6v6l2.24-2.24C17.32 8.85 18 10.34 18 12c0 1-.25 1.94-.68 2.77l1.46 1.46C19.55 15.01 20 13.56 20 12c0-2.21-.91-4.2-2.36-5.64L20 4z"/></svg>
<svg class="i" style="left:168.50px;top:304.00px;width:8px;height:8px;overflow:visible;" viewBox="0 0 24 24"><path fill="#111" stroke="#111" stroke-width="0.9" stroke-linejoin="round" d="M1 21h4V9H1v12zm22-11c0-1.1-.9-2-2-2h-6.31l.95-4.57.03-.32c0-.41-.17-.79-.44-1.06L14.17 1 7.59 7.59C7.22 7.95 7 8.45 7 9v10c0 1.1.9 2 2 2h9c.83 0 1.54-.5 1.84-1.22l3.02-7.05c.09-.23.14-.47.14-.73v-2z"/></svg>
<span class="t" style="left:179.00px;top:304.42px;font-size:8.12px;line-height:9.75px;color:#333;-webkit-text-stroke:.15px #333;">Profil düzenleme</span>
<svg class="i" style="left:266.70px;top:304.50px;width:8px;height:8px;overflow:visible;" viewBox="0 0 24 24"><path fill="#222" stroke="#222" stroke-width="0.7" stroke-linejoin="round" d="M12 4l-1.41 1.41L16.17 11H4v2h12.17l-5.58 5.59L12 20l8-8z"/></svg>
<svg class="i" style="left:158.60px;top:318.40px;width:7.6px;height:7.6px;overflow:visible;" viewBox="0 0 24 24"><path fill="#333" stroke="#333" stroke-width="0.7" stroke-linejoin="round" d="M10 6.35V4.26c-.8.21-1.55.54-2.23.96l1.46 1.46c.25-.12.5-.24.77-.33zm-7.14-.94l2.36 2.36C4.45 8.99 4 10.44 4 12c0 2.21.91 4.2 2.36 5.64L4 20h6v-6l-2.24 2.24C6.68 15.15 6 13.66 6 12c0-1 .25-1.94.68-2.77l8.08 8.08c-.25.13-.5.25-.77.34v2.09c.8-.21 1.55-.54 2.23-.96l2.36 2.36 1.27-1.27L4.14 4.14 2.86 5.41zM20 4h-6v6l2.24-2.24C17.32 8.85 18 10.34 18 12c0 1-.25 1.94-.68 2.77l1.46 1.46C19.55 15.01 20 13.56 20 12c0-2.21-.91-4.2-2.36-5.64L20 4z"/></svg>
<svg class="i" style="left:168.50px;top:317.70px;width:8px;height:8px;overflow:visible;" viewBox="0 0 24 24"><path fill="#111" stroke="#111" stroke-width="0.9" stroke-linejoin="round" d="M1 21h4V9H1v12zm22-11c0-1.1-.9-2-2-2h-6.31l.95-4.57.03-.32c0-.41-.17-.79-.44-1.06L14.17 1 7.59 7.59C7.22 7.95 7 8.45 7 9v10c0 1.1.9 2 2 2h9c.83 0 1.54-.5 1.84-1.22l3.02-7.05c.09-.23.14-.47.14-.73v-2z"/></svg>
<span class="t" style="left:179.00px;top:318.07px;font-size:8.20px;line-height:9.83px;color:#333;-webkit-text-stroke:.15px #333;">Social Login - facebook</span>
<svg class="i" style="left:266.70px;top:318.20px;width:8px;height:8px;overflow:visible;" viewBox="0 0 24 24"><path fill="#222" stroke="#222" stroke-width="0.7" stroke-linejoin="round" d="M12 4l-1.41 1.41L16.17 11H4v2h12.17l-5.58 5.59L12 20l8-8z"/></svg>
<svg class="i" style="left:158.60px;top:328.50px;width:7.6px;height:7.6px;overflow:visible;" viewBox="0 0 24 24"><path fill="#333" stroke="#333" stroke-width="0.7" stroke-linejoin="round" d="M12 4V1L8 5l4 4V6c3.31 0 6 2.69 6 6 0 1.01-.25 1.97-.7 2.8l1.46 1.46C19.54 15.03 20 13.57 20 12c0-4.42-3.58-8-8-8zm0 14c-3.31 0-6-2.69-6-6 0-1.01.25-1.97.7-2.8L5.24 7.74C4.46 8.97 4 10.43 4 12c0 4.42 3.58 8 8 8v3l4-4-4-4v3z"/></svg>
<svg class="i" style="left:168.50px;top:327.80px;width:8px;height:8px;overflow:visible;" viewBox="0 0 24 24"><path fill="#111" stroke="#111" stroke-width="0.9" stroke-linejoin="round" d="M1 21h4V9H1v12zm22-11c0-1.1-.9-2-2-2h-6.31l.95-4.57.03-.32c0-.41-.17-.79-.44-1.06L14.17 1 7.59 7.59C7.22 7.95 7 8.45 7 9v10c0 1.1.9 2 2 2h9c.83 0 1.54-.5 1.84-1.22l3.02-7.05c.09-.23.14-.47.14-.73v-2z"/></svg>
<span class="t" style="left:179.00px;top:328.21px;font-size:8.14px;line-height:9.77px;color:#333;-webkit-text-stroke:.15px #333;">Ana Sayfa Açılış - Login...</span>
<svg class="i" style="left:156.80px;top:337.20px;width:8px;height:8px;overflow:visible;" viewBox="0 0 24 24"><path fill="#222" stroke="#222" stroke-width="0.7" stroke-linejoin="round" d="M12 4l-1.41 1.41L16.17 11H4v2h12.17l-5.58 5.59L12 20l8-8z"/></svg>
<svg class="i" style="left:158.60px;top:346.50px;width:7.6px;height:7.6px;overflow:visible;" viewBox="0 0 24 24"><path fill="#333" stroke="#333" stroke-width="0.7" stroke-linejoin="round" d="M10 6.35V4.26c-.8.21-1.55.54-2.23.96l1.46 1.46c.25-.12.5-.24.77-.33zm-7.14-.94l2.36 2.36C4.45 8.99 4 10.44 4 12c0 2.21.91 4.2 2.36 5.64L4 20h6v-6l-2.24 2.24C6.68 15.15 6 13.66 6 12c0-1 .25-1.94.68-2.77l8.08 8.08c-.25.13-.5.25-.77.34v2.09c.8-.21 1.55-.54 2.23-.96l2.36 2.36 1.27-1.27L4.14 4.14 2.86 5.41zM20 4h-6v6l2.24-2.24C17.32 8.85 18 10.34 18 12c0 1-.25 1.94-.68 2.77l1.46 1.46C19.55 15.01 20 13.56 20 12c0-2.21-.91-4.2-2.36-5.64L20 4z"/></svg>
<svg class="i" style="left:168.50px;top:345.80px;width:8px;height:8px;overflow:visible;" viewBox="0 0 24 24"><path fill="#111" stroke="#111" stroke-width="0.9" stroke-linejoin="round" d="M1 21h4V9H1v12zm22-11c0-1.1-.9-2-2-2h-6.31l.95-4.57.03-.32c0-.41-.17-.79-.44-1.06L14.17 1 7.59 7.59C7.22 7.95 7 8.45 7 9v10c0 1.1.9 2 2 2h9c.83 0 1.54-.5 1.84-1.22l3.02-7.05c.09-.23.14-.47.14-.73v-2z"/></svg>
<span class="t" style="left:179.00px;top:346.19px;font-size:8.17px;line-height:9.8px;color:#333;-webkit-text-stroke:.15px #333;">Social Login - google</span>
<svg class="i" style="left:266.70px;top:346.30px;width:8px;height:8px;overflow:visible;" viewBox="0 0 24 24"><path fill="#222" stroke="#222" stroke-width="0.7" stroke-linejoin="round" d="M12 4l-1.41 1.41L16.17 11H4v2h12.17l-5.58 5.59L12 20l8-8z"/></svg>
<div class="r" style="left:292.80px;top:123.00px;width:211.60px;height:230.40px;background:#fff;border-radius:3px;box-shadow:0 2px 5px rgba(0,0,0,.24),0 0 4px rgba(0,0,0,.15)"></div>
<div class="r" style="left:298.00px;top:133.90px;width:17.4px;height:17.4px;background:#fff;border-radius:50%;box-shadow:0 0.500px 2px rgba(0,0,0,.2)"></div><svg class="i" style="left:299.70px;top:138.30px;width:14px;height:8px" viewBox="0 0 14 8"><path fill="#26365a" d="M4.200 1.100l2.300.600h1.400l2.700-.900-1 1.500.600 1.700-2-.500-2.300.400-.400-1.700z"/><rect x="0" y="4.600" width="6" height="1.900" fill="#e9505d"/><rect x="6" y="4.600" width="8" height="1.900" fill="#2d3a5c"/></svg>
<span class="t" style="left:324.60px;top:128.84px;font-size:6.93px;line-height:8.31px;color:#222;font-weight:bold;">Dil değiştirme</span>
<span class="t" style="left:324.60px;top:138.65px;font-size:6.91px;line-height:8.3px;color:#707070;">test name : Language - Loginsiz</span>
<span class="t" style="left:324.60px;top:149.36px;font-size:6.47px;line-height:7.76px;color:#222;font-weight:bold;">Language - Loginsiz</span>
<svg class="i" style="left:402.25px;top:146.95px;width:11.5px;height:11.5px;overflow:visible;" viewBox="0 0 24 24"><path fill="#555" d="M7 10l5 5 5-5z"/></svg>
<div class="r" style="left:292.80px;top:161.05px;width:211.60px;height:1.70px;background:#3f50b8;"></div>
<div class="r" style="left:304.95px;top:167.80px;width:13.46px;height:56.00px;background:#c7b02c;"></div>
<span class="t" style="left:309.18px;top:231.10px;font-size:6.15px;line-height:8px;color:#2a2a2a;-webkit-text-stroke:.12px #2a2a2a;transform-origin:0 0;transform:rotate(-90deg) translate(-100%,-50%);">Oppo A9 2020</span>
<div class="r" style="left:322.32px;top:167.80px;width:13.46px;height:56.00px;background:#52941f;"></div>
<span class="t" style="left:326.55px;top:231.10px;font-size:6.15px;line-height:8px;color:#2a2a2a;-webkit-text-stroke:.12px #2a2a2a;transform-origin:0 0;transform:rotate(-90deg) translate(-100%,-50%);">Samsung S8+</span>
<div class="r" style="left:339.68px;top:167.80px;width:13.46px;height:56.00px;background:#52941f;"></div>
<span class="t" style="left:343.91px;top:231.10px;font-size:6.15px;line-height:8px;color:#2a2a2a;-webkit-text-stroke:.12px #2a2a2a;transform-origin:0 0;transform:rotate(-90deg) translate(-100%,-50%);">Samsung Galaxy T...</span>
<div class="r" style="left:357.04px;top:167.80px;width:13.46px;height:33.60px;background:#52941f;"></div>
<div class="r" style="left:357.04px;top:201.40px;width:13.46px;height:22.40px;background:#ca3627;"></div>
<span class="t" style="left:361.27px;top:231.10px;font-size:6.15px;line-height:8px;color:#2a2a2a;-webkit-text-stroke:.12px #2a2a2a;transform-origin:0 0;transform:rotate(-90deg) translate(-100%,-50%);">Huawei P30 Lite</span>
<div class="r" style="left:374.41px;top:167.80px;width:13.46px;height:56.00px;background:#52941f;"></div>
<span class="t" style="left:378.64px;top:231.10px;font-size:6.15px;line-height:8px;color:#2a2a2a;-webkit-text-stroke:.12px #2a2a2a;transform-origin:0 0;transform:rotate(-90deg) translate(-100%,-50%);">Samsung A51</span>
<div class="r" style="left:391.77px;top:167.80px;width:13.46px;height:56.00px;background:#52941f;"></div>
<span class="t" style="left:396.00px;top:231.10px;font-size:6.15px;line-height:8px;color:#2a2a2a;-webkit-text-stroke:.12px #2a2a2a;transform-origin:0 0;transform:rotate(-90deg) translate(-100%,-50%);">Samsung A41</span>
<div class="r" style="left:409.14px;top:167.80px;width:13.46px;height:56.00px;background:#52941f;"></div>
<span class="t" style="left:413.36px;top:231.10px;font-size:6.15px;line-height:8px;color:#2a2a2a;-webkit-text-stroke:.12px #2a2a2a;transform-origin:0 0;transform:rotate(-90deg) translate(-100%,-50%);">Samsung A71</span>
<div class="r" style="left:426.50px;top:167.80px;width:13.46px;height:56.00px;background:#52941f;"></div>
<span class="t" style="left:430.73px;top:231.10px;font-size:6.15px;line-height:8px;color:#2a2a2a;-webkit-text-stroke:.12px #2a2a2a;transform-origin:0 0;transform:rotate(-90deg) translate(-100%,-50%);">Xiaomi Redmi Not...</span>
<div class="r" style="left:443.86px;top:167.80px;width:13.46px;height:56.00px;background:#52941f;"></div>
<span class="t" style="left:448.09px;top:231.10px;font-size:6.15px;line-height:8px;color:#2a2a2a;-webkit-text-stroke:.12px #2a2a2a;transform-origin:0 0;transform:rotate(-90deg) translate(-100%,-50%);">Samsung Note 9</span>
<div class="r" style="left:461.23px;top:167.80px;width:13.46px;height:56.00px;background:#c7b02c;"></div>
<span class="t" style="left:465.45px;top:231.10px;font-size:6.15px;line-height:8px;color:#2a2a2a;-webkit-text-stroke:.12px #2a2a2a;transform-origin:0 0;transform:rotate(-90deg) translate(-100%,-50%);">Xiaomi Redmi Not...</span>
<div class="r" style="left:478.59px;top:167.80px;width:13.46px;height:56.00px;background:#52941f;"></div>
<span class="t" style="left:482.82px;top:231.10px;font-size:6.15px;line-height:8px;color:#2a2a2a;-webkit-text-stroke:.12px #2a2a2a;transform-origin:0 0;transform:rotate(-90deg) translate(-100%,-50%);">Samsung A70</span>
<div class="r" style="left:292.80px;top:286.80px;width:211.60px;height:15.90px;background:#f0f0f0;"></div>
<div class="r" style="left:297.10px;top:291.20px;width:7.40px;height:7.40px;background:#ca3627;border-radius:1.500px"></div>
<span class="t" style="left:306.70px;top:291.56px;font-size:6.32px;line-height:7.58px;color:#b4b6c0;">failed</span>
<div class="r" style="left:330.10px;top:291.20px;width:7.40px;height:7.40px;background:#52941f;border-radius:1.500px"></div>
<span class="t" style="left:340.00px;top:291.70px;font-size:6.11px;line-height:7.33px;color:#b4b6c0;">passed</span>
<div class="r" style="left:367.70px;top:291.20px;width:7.40px;height:7.40px;background:#c7b02c;border-radius:1.500px"></div>
<span class="t" style="left:377.50px;top:291.69px;font-size:6.12px;line-height:7.35px;color:#b4b6c0;">skipped</span>
<span class="t" style="left:300.90px;top:312.10px;font-size:6.84px;line-height:8.21px;color:#0a9be3;-webkit-text-stroke:.15px #0a9be3;">GO TO DETAILS</span>
<svg class="i" style="left:484.85px;top:310.65px;width:10.5px;height:10.5px;overflow:visible;" viewBox="0 0 24 24"><path fill="#222" stroke="#222" stroke-width="0.8" stroke-linejoin="round" d="M16.59 8.59L12 13.17 7.41 8.59 6 10l6 6 6-6z"/></svg>
<div class="r" style="left:292.80px;top:329.10px;width:211.60px;height:0.50px;background:#e4e4e4;"></div>
<svg class="i" style="left:460.20px;top:335.80px;width:12px;height:12px;overflow:visible;" viewBox="0 0 24 24"><path fill="#111" stroke="#111" stroke-width="0.3" stroke-linejoin="round" d="M1 21h4V9H1v12zm22-11c0-1.1-.9-2-2-2h-6.31l.95-4.57.03-.32c0-.41-.17-.79-.44-1.06L14.17 1 7.59 7.59C7.22 7.95 7 8.45 7 9v10c0 1.1.9 2 2 2h9c.83 0 1.54-.5 1.84-1.22l3.02-7.05c.09-.23.14-.47.14-.73v-2z"/></svg>
<div class="r" style="left:517.10px;top:123.00px;width:211.60px;height:230.40px;background:#fff;border-radius:3px;box-shadow:0 2px 5px rgba(0,0,0,.24),0 0 4px rgba(0,0,0,.15)"></div>
<div class="r" style="left:522.30px;top:133.90px;width:17.4px;height:17.4px;background:#fff;border-radius:50%;box-shadow:0 0.500px 2px rgba(0,0,0,.2)"></div><svg class="i" style="left:524.00px;top:138.30px;width:14px;height:8px" viewBox="0 0 14 8"><path fill="#26365a" d="M4.200 1.100l2.300.600h1.400l2.700-.900-1 1.500.600 1.700-2-.500-2.300.400-.400-1.700z"/><rect x="0" y="4.600" width="6" height="1.900" fill="#e9505d"/><rect x="6" y="4.600" width="8" height="1.900" fill="#2d3a5c"/></svg>
<span class="t" style="left:548.90px;top:128.85px;font-size:6.92px;line-height:8.3px;color:#222;font-weight:bold;">Rezervasyonlarım - loginsiz</span>
<span class="t" style="left:548.90px;top:138.71px;font-size:6.83px;line-height:8.19px;color:#707070;">test name : Rezervasyon - Loginsiz</span>
<span class="t" style="left:548.90px;top:149.40px;font-size:6.40px;line-height:7.68px;color:#222;font-weight:bold;">Rezervasyon - Loginsiz</span>
<svg class="i" style="left:626.75px;top:146.95px;width:11.5px;height:11.5px;overflow:visible;" viewBox="0 0 24 24"><path fill="#555" d="M7 10l5 5 5-5z"/></svg>
<div class="r" style="left:517.10px;top:161.05px;width:211.60px;height:1.70px;background:#f23d33;"></div>
<div class="r" style="left:529.09px;top:167.80px;width:12.34px;height:28.00px;background:#52941f;"></div>
<div class="r" style="left:529.09px;top:195.80px;width:12.34px;height:28.00px;background:#ca3627;"></div>
<span class="t" style="left:532.76px;top:231.10px;font-size:6.15px;line-height:8px;color:#2a2a2a;-webkit-text-stroke:.12px #2a2a2a;transform-origin:0 0;transform:rotate(-90deg) translate(-100%,-50%);">Samsung A70</span>
<div class="r" style="left:545.01px;top:167.80px;width:12.34px;height:56.00px;background:#ca3627;"></div>
<span class="t" style="left:548.68px;top:231.10px;font-size:6.15px;line-height:8px;color:#2a2a2a;-webkit-text-stroke:.12px #2a2a2a;transform-origin:0 0;transform:rotate(-90deg) translate(-100%,-50%);">Oppo A9 2020</span>
<div class="r" style="left:560.92px;top:167.80px;width:12.34px;height:18.65px;background:#52941f;"></div>
<div class="r" style="left:560.92px;top:186.45px;width:12.34px;height:37.35px;background:#ca3627;"></div>
<span class="t" style="left:564.59px;top:231.10px;font-size:6.15px;line-height:8px;color:#2a2a2a;-webkit-text-stroke:.12px #2a2a2a;transform-origin:0 0;transform:rotate(-90deg) translate(-100%,-50%);">Samsung A71</span>
<div class="r" style="left:576.84px;top:167.80px;width:12.34px;height:18.65px;background:#52941f;"></div>
<div class="r" style="left:576.84px;top:186.45px;width:12.34px;height:37.35px;background:#ca3627;"></div>
<span class="t" style="left:580.51px;top:231.10px;font-size:6.15px;line-height:8px;color:#2a2a2a;-webkit-text-stroke:.12px #2a2a2a;transform-origin:0 0;transform:rotate(-90deg) translate(-100%,-50%);">Samsung A51</span>
<div class="r" style="left:592.76px;top:167.80px;width:12.34px;height:18.65px;background:#52941f;"></div>
<div class="r" style="left:592.76px;top:186.45px;width:12.34px;height:37.35px;background:#ca3627;"></div>
<span class="t" style="left:596.43px;top:231.10px;font-size:6.15px;line-height:8px;color:#2a2a2a;-webkit-text-stroke:.12px #2a2a2a;transform-origin:0 0;transform:rotate(-90deg) translate(-100%,-50%);">Samsung A41</span>
<div class="r" style="left:608.67px;top:167.80px;width:12.34px;height:18.65px;background:#52941f;"></div>
<div class="r" style="left:608.67px;top:186.45px;width:12.34px;height:37.35px;background:#ca3627;"></div>
<span class="t" style="left:612.34px;top:231.10px;font-size:6.15px;line-height:8px;color:#2a2a2a;-webkit-text-stroke:.12px #2a2a2a;transform-origin:0 0;transform:rotate(-90deg) translate(-100%,-50%);">Samsung Note 9</span>
<div class="r" style="left:624.59px;top:167.80px;width:12.34px;height:18.65px;background:#52941f;"></div>
<div class="r" style="left:624.59px;top:186.45px;width:12.34px;height:37.35px;background:#ca3627;"></div>
<span class="t" style="left:628.26px;top:231.10px;font-size:6.15px;line-height:8px;color:#2a2a2a;-webkit-text-stroke:.12px #2a2a2a;transform-origin:0 0;transform:rotate(-90deg) translate(-100%,-50%);">Samsung Galaxy T...</span>
<div class="r" style="left:640.51px;top:167.80px;width:12.34px;height:18.65px;background:#52941f;"></div>
<div class="r" style="left:640.51px;top:186.45px;width:12.34px;height:37.35px;background:#ca3627;"></div>
<span class="t" style="left:644.18px;top:231.10px;font-size:6.15px;line-height:8px;color:#2a2a2a;-webkit-text-stroke:.12px #2a2a2a;transform-origin:0 0;transform:rotate(-90deg) translate(-100%,-50%);">Samsung S8+</span>
<div class="r" style="left:656.42px;top:167.80px;width:12.34px;height:56.00px;background:#52941f;"></div>
<span class="t" style="left:660.09px;top:231.10px;font-size:6.15px;line-height:8px;color:#2a2a2a;-webkit-text-stroke:.12px #2a2a2a;transform-origin:0 0;transform:rotate(-90deg) translate(-100%,-50%);">Samsung S10</span>
<div class="r" style="left:672.34px;top:167.80px;width:12.34px;height:28.00px;background:#52941f;"></div>
<div class="r" style="left:672.34px;top:195.80px;width:12.34px;height:28.00px;background:#ca3627;"></div>
<span class="t" style="left:676.01px;top:231.10px;font-size:6.15px;line-height:8px;color:#2a2a2a;-webkit-text-stroke:.12px #2a2a2a;transform-origin:0 0;transform:rotate(-90deg) translate(-100%,-50%);">Huawei P30 Lite</span>
<div class="r" style="left:688.26px;top:167.80px;width:12.34px;height:18.65px;background:#52941f;"></div>
<div class="r" style="left:688.26px;top:186.45px;width:12.34px;height:37.35px;background:#ca3627;"></div>
<span class="t" style="left:691.93px;top:231.10px;font-size:6.15px;line-height:8px;color:#2a2a2a;-webkit-text-stroke:.12px #2a2a2a;transform-origin:0 0;transform:rotate(-90deg) translate(-100%,-50%);">Xiaomi Redmi Not...</span>
<div class="r" style="left:704.17px;top:167.80px;width:12.34px;height:56.00px;background:#c7b02c;"></div>
<span class="t" style="left:707.84px;top:231.10px;font-size:6.15px;line-height:8px;color:#2a2a2a;-webkit-text-stroke:.12px #2a2a2a;transform-origin:0 0;transform:rotate(-90deg) translate(-100%,-50%);">Xiaomi Redmi Not...</span>
<div class="r" style="left:517.10px;top:286.80px;width:211.60px;height:15.90px;background:#f0f0f0;"></div>
<div class="r" style="left:521.40px;top:291.20px;width:7.40px;height:7.40px;background:#ca3627;border-radius:1.500px"></div>
<span class="t" style="left:531.00px;top:291.56px;font-size:6.32px;line-height:7.58px;color:#b4b6c0;">failed</span>
<div class="r" style="left:554.40px;top:291.20px;width:7.40px;height:7.40px;background:#52941f;border-radius:1.500px"></div>
<span class="t" style="left:564.30px;top:291.70px;font-size:6.11px;line-height:7.33px;color:#b4b6c0;">passed</span>
<div class="r" style="left:592.00px;top:291.20px;width:7.40px;height:7.40px;background:#c7b02c;border-radius:1.500px"></div>
<span class="t" style="left:601.80px;top:291.69px;font-size:6.12px;line-height:7.35px;color:#b4b6c0;">skipped</span>
<span class="t" style="left:525.20px;top:312.10px;font-size:6.84px;line-height:8.21px;color:#0a9be3;-webkit-text-stroke:.15px #0a9be3;">GO TO DETAILS</span>
<svg class="i" style="left:709.15px;top:310.65px;width:10.5px;height:10.5px;overflow:visible;" viewBox="0 0 24 24"><path fill="#222" stroke="#222" stroke-width="0.8" stroke-linejoin="round" d="M16.59 8.59L12 13.17 7.41 8.59 6 10l6 6 6-6z"/></svg>
<div class="r" style="left:517.10px;top:329.10px;width:211.60px;height:0.50px;background:#e4e4e4;"></div>
<svg class="i" style="left:684.50px;top:335.80px;width:12px;height:12px;overflow:visible;" viewBox="0 0 24 24"><path fill="#111" stroke="#111" stroke-width="0.3" stroke-linejoin="round" d="M1 21h4V9H1v12zm22-11c0-1.1-.9-2-2-2h-6.31l.95-4.57.03-.32c0-.41-.17-.79-.44-1.06L14.17 1 7.59 7.59C7.22 7.95 7 8.45 7 9v10c0 1.1.9 2 2 2h9c.83 0 1.54-.5 1.84-1.22l3.02-7.05c.09-.23.14-.47.14-.73v-2z"/></svg>
<div class="r" style="left:292.80px;top:366.50px;width:211.60px;height:133.50px;background:#fff;border-radius:3px;box-shadow:0 2px 5px rgba(0,0,0,.24),0 0 4px rgba(0,0,0,.15)"></div>
<div class="r" style="left:298.00px;top:372.20px;width:17.4px;height:17.4px;background:#fff;border-radius:50%;box-shadow:0 0.500px 2px rgba(0,0,0,.2)"></div><svg class="i" style="left:299.70px;top:376.60px;width:14px;height:8px" viewBox="0 0 14 8"><path fill="#26365a" d="M4.200 1.100l2.300.600h1.400l2.700-.900-1 1.500.600 1.700-2-.500-2.300.400-.400-1.700z"/><rect x="0" y="4.600" width="6" height="1.900" fill="#e9505d"/><rect x="6" y="4.600" width="8" height="1.900" fill="#2d3a5c"/></svg>
<span class="t" style="left:324.60px;top:372.35px;font-size:6.91px;line-height:8.29px;color:#222;font-weight:bold;">Kupon testi - loginli</span>
<span class="t" style="left:324.60px;top:382.13px;font-size:6.94px;line-height:8.33px;color:#707070;">test name : Kupon - Loginli</span>
<span class="t" style="left:412.40px;top:381.93px;font-size:6.36px;line-height:7.63px;color:#222;font-weight:bold;">Kupon - Loginli</span>
<svg class="i" style="left:489.75px;top:379.45px;width:11.5px;height:11.5px;overflow:visible;" viewBox="0 0 24 24"><path fill="#555" d="M7 10l5 5 5-5z"/></svg>
<div class="r" style="left:292.80px;top:394.40px;width:211.60px;height:1.70px;background:#47b04d;"></div>
<div class="r" style="left:304.95px;top:401.40px;width:13.46px;height:28.00px;background:#52941f;"></div>
<div class="r" style="left:304.95px;top:429.40px;width:13.46px;height:28.00px;background:#ca3627;"></div>
<span class="t" style="left:309.18px;top:464.70px;font-size:6.15px;line-height:8px;color:#2a2a2a;-webkit-text-stroke:.12px #2a2a2a;transform-origin:0 0;transform:rotate(-90deg) translate(-100%,-50%);">Huawei P30 Lite</span>
<div class="r" style="left:322.32px;top:401.40px;width:13.46px;height:56.00px;background:#52941f;"></div>
<span class="t" style="left:326.55px;top:464.70px;font-size:6.15px;line-height:8px;color:#2a2a2a;-webkit-text-stroke:.12px #2a2a2a;transform-origin:0 0;transform:rotate(-90deg) translate(-100%,-50%);">Samsung A70</span>
<div class="r" style="left:339.68px;top:401.40px;width:13.46px;height:18.65px;background:#52941f;"></div>
<div class="r" style="left:339.68px;top:420.05px;width:13.46px;height:37.35px;background:#ca3627;"></div>
<span class="t" style="left:343.91px;top:464.70px;font-size:6.15px;line-height:8px;color:#2a2a2a;-webkit-text-stroke:.12px #2a2a2a;transform-origin:0 0;transform:rotate(-90deg) translate(-100%,-50%);">Oppo A9 2020</span>
<div class="r" style="left:357.04px;top:401.40px;width:13.46px;height:56.00px;background:#52941f;"></div>
<span class="t" style="left:361.27px;top:464.70px;font-size:6.15px;line-height:8px;color:#2a2a2a;-webkit-text-stroke:.12px #2a2a2a;transform-origin:0 0;transform:rotate(-90deg) translate(-100%,-50%);">Samsung A41</span>
<div class="r" style="left:374.41px;top:401.40px;width:13.46px;height:56.00px;background:#52941f;"></div>
<span class="t" style="left:378.64px;top:464.70px;font-size:6.15px;line-height:8px;color:#2a2a2a;-webkit-text-stroke:.12px #2a2a2a;transform-origin:0 0;transform:rotate(-90deg) translate(-100%,-50%);">Samsung A51</span>
<div class="r" style="left:391.77px;top:401.40px;width:13.46px;height:56.00px;background:#52941f;"></div>
<span class="t" style="left:396.00px;top:464.70px;font-size:6.15px;line-height:8px;color:#2a2a2a;-webkit-text-stroke:.12px #2a2a2a;transform-origin:0 0;transform:rotate(-90deg) translate(-100%,-50%);">Samsung A71</span>
<div class="r" style="left:409.14px;top:401.40px;width:13.46px;height:56.00px;background:#52941f;"></div>
<span class="t" style="left:413.36px;top:464.70px;font-size:6.15px;line-height:8px;color:#2a2a2a;-webkit-text-stroke:.12px #2a2a2a;transform-origin:0 0;transform:rotate(-90deg) translate(-100%,-50%);">Samsung Note 9</span>
<div class="r" style="left:426.50px;top:401.40px;width:13.46px;height:56.00px;background:#52941f;"></div>
<span class="t" style="left:430.73px;top:464.70px;font-size:6.15px;line-height:8px;color:#2a2a2a;-webkit-text-stroke:.12px #2a2a2a;transform-origin:0 0;transform:rotate(-90deg) translate(-100%,-50%);">Samsung Galaxy T...</span>
<div class="r" style="left:443.86px;top:401.40px;width:13.46px;height:56.00px;background:#52941f;"></div>
<span class="t" style="left:448.09px;top:464.70px;font-size:6.15px;line-height:8px;color:#2a2a2a;-webkit-text-stroke:.12px #2a2a2a;transform-origin:0 0;transform:rotate(-90deg) translate(-100%,-50%);">Samsung S8+</span>
<div class="r" style="left:461.23px;top:401.40px;width:13.46px;height:56.00px;background:#52941f;"></div>
<span class="t" style="left:465.45px;top:464.70px;font-size:6.15px;line-height:8px;color:#2a2a2a;-webkit-text-stroke:.12px #2a2a2a;transform-origin:0 0;transform:rotate(-90deg) translate(-100%,-50%);">Xiaomi Redmi Not...</span>
<div class="r" style="left:478.59px;top:401.40px;width:13.46px;height:56.00px;background:#c7b02c;"></div>
<span class="t" style="left:482.82px;top:464.70px;font-size:6.15px;line-height:8px;color:#2a2a2a;-webkit-text-stroke:.12px #2a2a2a;transform-origin:0 0;transform:rotate(-90deg) translate(-100%,-50%);">Xiaomi Redmi Not...</span>
<div class="r" style="left:517.10px;top:366.50px;width:211.60px;height:133.50px;background:#fff;border-radius:3px;box-shadow:0 2px 5px rgba(0,0,0,.24),0 0 4px rgba(0,0,0,.15)"></div>
<div class="r" style="left:522.30px;top:377.30px;width:17.4px;height:17.4px;background:#fff;border-radius:50%;box-shadow:0 0.500px 2px rgba(0,0,0,.2)"></div><svg class="i" style="left:524.00px;top:381.70px;width:14px;height:8px" viewBox="0 0 14 8"><path fill="#26365a" d="M4.200 1.100l2.300.600h1.400l2.700-.900-1 1.500.600 1.700-2-.500-2.300.400-.400-1.700z"/><rect x="0" y="4.600" width="6" height="1.900" fill="#e9505d"/><rect x="6" y="4.600" width="8" height="1.900" fill="#2d3a5c"/></svg>
<span class="t" style="left:548.90px;top:372.36px;font-size:6.90px;line-height:8.28px;color:#222;font-weight:bold;">Kupon testi - loginsiz</span>
<span class="t" style="left:548.90px;top:382.13px;font-size:6.94px;line-height:8.33px;color:#707070;">test name : Kupon testi - loginsiz</span>
<span class="t" style="left:548.90px;top:392.45px;font-size:6.33px;line-height:7.6px;color:#222;font-weight:bold;">Kupon testi - loginsiz</span>
<svg class="i" style="left:626.15px;top:389.95px;width:11.5px;height:11.5px;overflow:visible;" viewBox="0 0 24 24"><path fill="#555" d="M7 10l5 5 5-5z"/></svg>
<div class="r" style="left:517.10px;top:404.45px;width:211.60px;height:1.70px;background:#3f50b8;"></div>
<div class="r" style="left:529.25px;top:411.30px;width:13.46px;height:56.00px;background:#52941f;"></div>
<span class="t" style="left:533.48px;top:474.60px;font-size:6.15px;line-height:8px;color:#2a2a2a;-webkit-text-stroke:.12px #2a2a2a;transform-origin:0 0;transform:rotate(-90deg) translate(-100%,-50%);">Huawei P30 Lite</span>
<div class="r" style="left:546.62px;top:411.30px;width:13.46px;height:56.00px;background:#52941f;"></div>
<span class="t" style="left:550.85px;top:474.60px;font-size:6.15px;line-height:8px;color:#2a2a2a;-webkit-text-stroke:.12px #2a2a2a;transform-origin:0 0;transform:rotate(-90deg) translate(-100%,-50%);">Samsung A70</span>
<div class="r" style="left:563.98px;top:411.30px;width:13.46px;height:56.00px;background:#52941f;"></div>
<span class="t" style="left:568.21px;top:474.60px;font-size:6.15px;line-height:8px;color:#2a2a2a;-webkit-text-stroke:.12px #2a2a2a;transform-origin:0 0;transform:rotate(-90deg) translate(-100%,-50%);">Samsung Note 9</span>
<div class="r" style="left:581.34px;top:411.30px;width:13.46px;height:56.00px;background:#52941f;"></div>
<span class="t" style="left:585.57px;top:474.60px;font-size:6.15px;line-height:8px;color:#2a2a2a;-webkit-text-stroke:.12px #2a2a2a;transform-origin:0 0;transform:rotate(-90deg) translate(-100%,-50%);">Samsung A71</span>
<div class="r" style="left:598.71px;top:411.30px;width:13.46px;height:56.00px;background:#52941f;"></div>
<span class="t" style="left:602.94px;top:474.60px;font-size:6.15px;line-height:8px;color:#2a2a2a;-webkit-text-stroke:.12px #2a2a2a;transform-origin:0 0;transform:rotate(-90deg) translate(-100%,-50%);">Samsung S8+</span>
<div class="r" style="left:616.07px;top:411.30px;width:13.46px;height:56.00px;background:#52941f;"></div>
<span class="t" style="left:620.30px;top:474.60px;font-size:6.15px;line-height:8px;color:#2a2a2a;-webkit-text-stroke:.12px #2a2a2a;transform-origin:0 0;transform:rotate(-90deg) translate(-100%,-50%);">Samsung A41</span>
<div class="r" style="left:633.44px;top:411.30px;width:13.46px;height:56.00px;background:#c7b02c;"></div>
<span class="t" style="left:637.66px;top:474.60px;font-size:6.15px;line-height:8px;color:#2a2a2a;-webkit-text-stroke:.12px #2a2a2a;transform-origin:0 0;transform:rotate(-90deg) translate(-100%,-50%);">Oppo A9 2020</span>
<div class="r" style="left:650.80px;top:411.30px;width:13.46px;height:56.00px;background:#52941f;"></div>
<span class="t" style="left:655.03px;top:474.60px;font-size:6.15px;line-height:8px;color:#2a2a2a;-webkit-text-stroke:.12px #2a2a2a;transform-origin:0 0;transform:rotate(-90deg) translate(-100%,-50%);">Xiaomi Redmi Not...</span>
<div class="r" style="left:668.16px;top:411.30px;width:13.46px;height:56.00px;background:#52941f;"></div>
<span class="t" style="left:672.39px;top:474.60px;font-size:6.15px;line-height:8px;color:#2a2a2a;-webkit-text-stroke:.12px #2a2a2a;transform-origin:0 0;transform:rotate(-90deg) translate(-100%,-50%);">Samsung Galaxy T...</span>
<div class="r" style="left:685.53px;top:411.30px;width:13.46px;height:56.00px;background:#52941f;"></div>
<span class="t" style="left:689.75px;top:474.60px;font-size:6.15px;line-height:8px;color:#2a2a2a;-webkit-text-stroke:.12px #2a2a2a;transform-origin:0 0;transform:rotate(-90deg) translate(-100%,-50%);">Samsung A51</span>
<div class="r" style="left:702.89px;top:411.30px;width:13.46px;height:56.00px;background:#c7b02c;"></div>
<span class="t" style="left:707.12px;top:474.60px;font-size:6.15px;line-height:8px;color:#2a2a2a;-webkit-text-stroke:.12px #2a2a2a;transform-origin:0 0;transform:rotate(-90deg) translate(-100%,-50%);">Xiaomi Redmi Not...</span>
</div>
</body></html>
